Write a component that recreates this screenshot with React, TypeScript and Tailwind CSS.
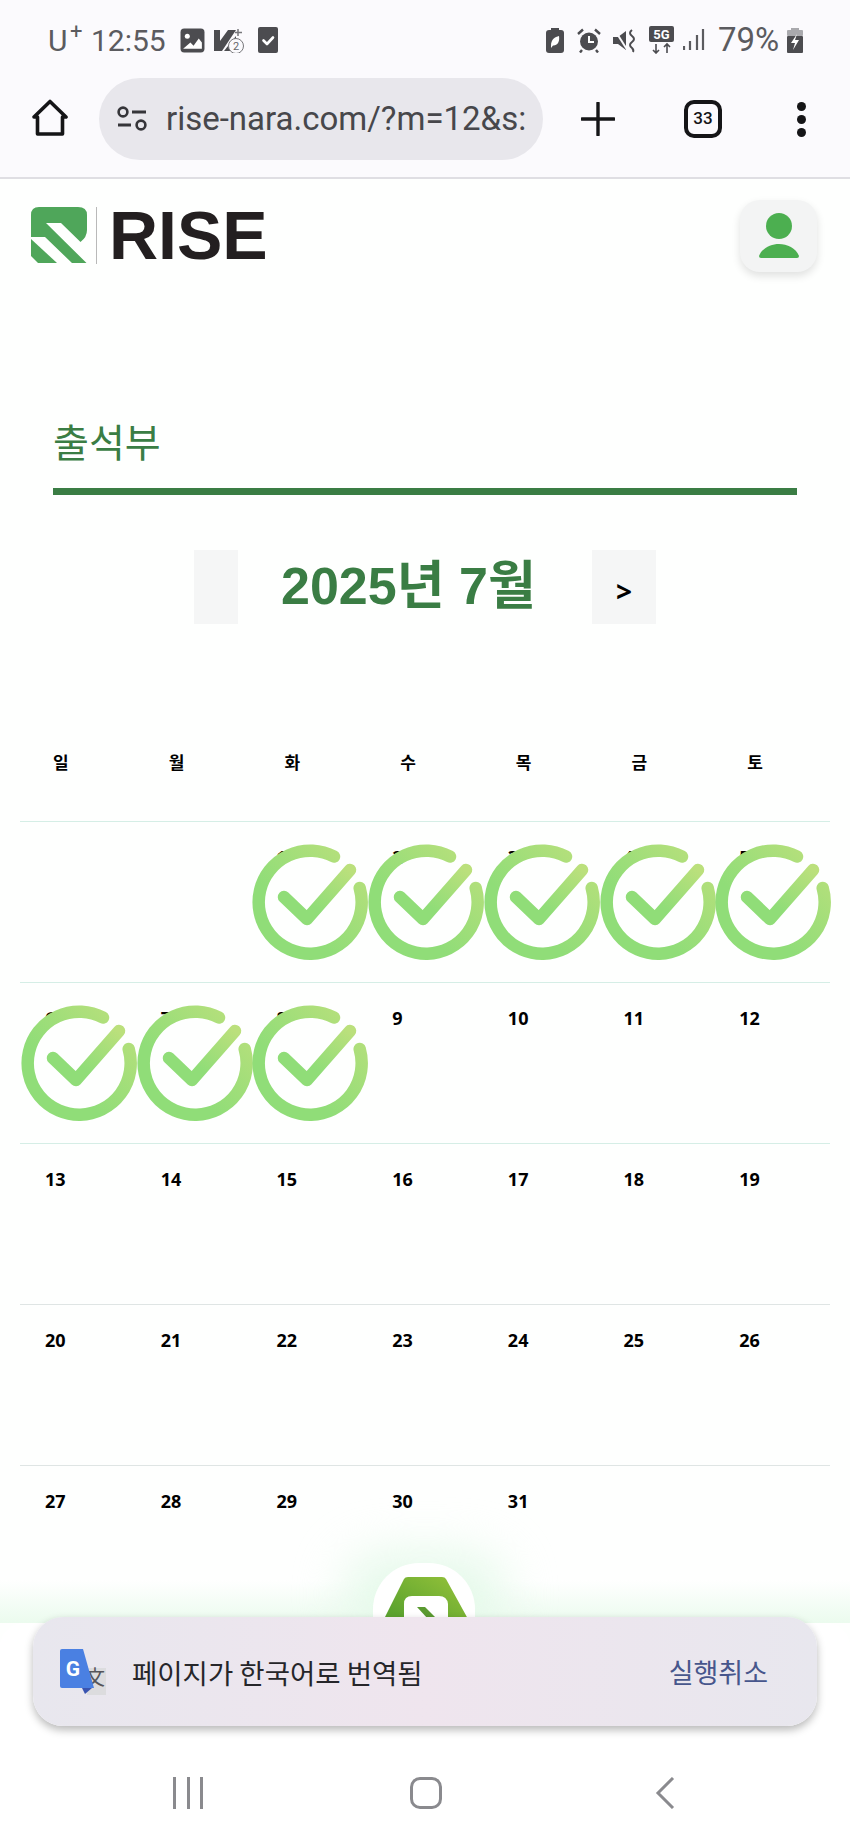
const WEEK_DAYS = ['일', '월', '화', '수', '목', '금', '토'];

const WEEKS: (number | null)[][] = [
  [null, null, 1, 2, 3, 4, 5],
  [6, 7, 8, 9, 10, 11, 12],
  [13, 14, 15, 16, 17, 18, 19],
  [20, 21, 22, 23, 24, 25, 26],
  [27, 28, 29, 30, 31, null, null],
];

const ATTENDED = [1, 2, 3, 4, 5, 6, 7, 8];

function CheckStamp({ day }: { day: number }) {
  const id = `stamp-${day}`;
  return (
    <svg viewBox="0 0 116 116" className="absolute left-px top-[22px] h-[116px] w-[116px]" aria-hidden="true">
      <defs>
        <linearGradient id={id} x1="0" y1="1" x2="1" y2="0">
          <stop offset="0.35" stopColor="#90dd78" />
          <stop offset="1" stopColor="#bbe07c" />
        </linearGradient>
      </defs>
      <g fill="none" stroke={`url(#${id})`} strokeWidth="12.5" strokeLinecap="round" strokeLinejoin="round">
        <path d="M82 12.5A51.5 51.5 0 1 0 107.7 44" />
        <path d="M32 53 L55 75 L98 26" />
      </g>
    </svg>
  );
}

function StatusBar() {
  return (
    <div className="flex h-[60px] items-center justify-between pl-[48px] pr-[47px] pt-[20px] font-['Roboto',sans-serif] text-[30px] text-[#5b5b5f]">
      <div className="flex items-center">
        <span className="relative w-[43px]">
          U<span className="absolute left-[22px] top-[-3px] text-[22px]">+</span>
        </span>
        <span className="w-[89px]">12:55</span>
        <svg viewBox="0 0 24 24" className="h-[25px] w-[25px]" aria-hidden="true">
          <rect x="0.5" y="0.5" width="23" height="23" rx="3.5" fill="#4c4c50" />
          <circle cx="7" cy="8" r="2.4" fill="#fff" />
          <path d="M3 20 L10 14 L13 17 L18 10 L21 14 V20 Z" fill="#fff" />
        </svg>
        <svg viewBox="0 0 34 26" className="ml-[9px] h-[26px] w-[34px]" aria-hidden="true">
          <path d="M0 3 H6 V14 L14 3 H22 L8 24 H0 Z" fill="#4c4c50" />
          <path d="M10 24 L22 9 V24 Z" fill="#4c4c50" />
          <circle cx="22" cy="19" r="7.5" fill="#fbfafd" stroke="#77777b" strokeWidth="1" />
          <text x="22" y="23" textAnchor="middle" fontSize="11" fill="#66666a" fontFamily="Roboto, sans-serif">2</text>
          <path d="M24 2 V9 M21 5.5 H28" stroke="#77777b" strokeWidth="1.5" />
        </svg>
        <svg viewBox="0 0 20 26" className="ml-[10px] h-[26px] w-[20px]" aria-hidden="true">
          <rect width="20" height="26" rx="2" fill="#4c4c50" />
          <path d="M5.5 13.5 L9 17 L15 10.5" fill="none" stroke="#fff" strokeWidth="2.6" strokeLinecap="round" strokeLinejoin="round" />
        </svg>
      </div>
      <div className="flex items-center">
        <svg viewBox="0 0 18 25" className="h-[25px] w-[18px]" aria-hidden="true">
          <rect x="5" width="8" height="3" fill="#4c4c50" />
          <rect y="2" width="18" height="23" rx="3" fill="#4c4c50" />
          <path d="M5 18 C5 11 9 9 13 8 C14 14 11 18 7 17.5 L5 20 Z" fill="#fff" />
        </svg>
        <svg viewBox="0 0 24 25" className="ml-[13px] h-[25px] w-[24px]" aria-hidden="true">
          <circle cx="12" cy="13.5" r="9" fill="#4c4c50" />
          <path d="M12 8 V14 H17" fill="none" stroke="#fff" strokeWidth="2" />
          <path d="M1 6 L6 1.5 M23 6 L18 1.5 M5 22 L3 24.5 M19 22 L21 24.5" stroke="#4c4c50" strokeWidth="2.4" />
        </svg>
        <svg viewBox="0 0 24 25" className="ml-[12px] h-[25px] w-[24px]" aria-hidden="true">
          <path d="M0 9 H5 L13 3 V22 L5 16 H0 Z" fill="#4c4c50" />
          <path d="M1 1 L15 23" stroke="#fbfafd" strokeWidth="2" />
          <path d="M19 2 Q15 5 19 8 Q23 11 19 14 Q15 17 19 20 Q21 22 20 24" fill="none" stroke="#4c4c50" strokeWidth="2" />
        </svg>
        <svg viewBox="0 0 25 28" className="ml-[12px] h-[28px] w-[25px]" aria-hidden="true">
          <rect width="25" height="16" rx="2" fill="#4c4c50" />
          <text x="12.5" y="13" textAnchor="middle" fontSize="13" fontWeight="700" fill="#fff" fontFamily="Roboto, sans-serif">5G</text>
          <path d="M7 18 V27 M4 24 L7 27 L10 24 M18 27 V18 M15 21 L18 18 L21 21" fill="none" stroke="#4c4c50" strokeWidth="1.6" />
        </svg>
        <svg viewBox="0 0 22 22" className="ml-[9px] h-[22px] w-[22px]" aria-hidden="true">
          <path d="M1 17 V21 M7 12 V21 M14 6 V21 M20 0 V21" stroke="#5b5b5f" strokeWidth="2.2" />
        </svg>
        <span className="ml-[13px] w-[64px] text-[33px]">79%</span>
        <svg viewBox="0 0 16 25" className="ml-[5px] h-[25px] w-[16px]" aria-hidden="true">
          <rect x="4" width="8" height="3" fill="#a9a9ad" />
          <rect y="2" width="16" height="6" rx="1" fill="#a9a9ad" />
          <rect y="8" width="16" height="17" rx="1" fill="#4c4c50" />
          <path d="M10 6 L4 15 H8 L6 22 L12 12 H8 Z" fill="#fff" />
        </svg>
      </div>
    </div>
  );
}

function Toolbar() {
  return (
    <div className="flex h-[119px] items-start border-b-2 border-[#dfdee3] pt-[18px]">
      <svg viewBox="0 0 38 38" className="ml-[31px] mt-[21px] h-[38px] w-[38px]" aria-hidden="true">
        <path d="M19 2.5 L35 18 H31.5 V35 H6.5 V18 H3 Z" fill="none" stroke="#151517" strokeWidth="3.6" strokeLinejoin="round" />
      </svg>
      <div className="ml-[30px] flex h-[82px] w-[444px] items-center rounded-full bg-[#e8e7ec] pl-[17px]">
        <svg viewBox="0 0 32 26" className="h-[26px] w-[32px] shrink-0" aria-hidden="true">
          <circle cx="7" cy="6" r="4.4" fill="none" stroke="#353539" strokeWidth="2.6" />
          <path d="M16 6 H30 M2 19 H15" stroke="#353539" strokeWidth="2.8" />
          <circle cx="25" cy="19" r="4.4" fill="none" stroke="#353539" strokeWidth="2.6" />
        </svg>
        <span className="ml-[18px] whitespace-nowrap font-['Roboto',sans-serif] text-[33px] leading-[40px] text-[#47474b]">
          rise-nara.com/?m=12&amp;s:
        </span>
      </div>
      <svg viewBox="0 0 34 34" className="ml-[38px] mt-[24px] h-[34px] w-[34px]" aria-hidden="true">
        <path d="M17 1 V33 M1 17 H33" stroke="#151517" strokeWidth="3.4" strokeLinecap="round" />
      </svg>
      <div className="ml-[69px] mt-[22px] flex h-[38px] w-[38px] items-center justify-center rounded-[10px] border-[4px] border-[#151517] font-['Roboto',sans-serif] text-[17px] font-medium text-[#151517]">
        33
      </div>
      <div className="ml-[75px] mt-[24px] flex flex-col gap-[4px]">
        <span className="h-[9px] w-[9px] rounded-full bg-[#151517]" />
        <span className="h-[9px] w-[9px] rounded-full bg-[#151517]" />
        <span className="h-[9px] w-[9px] rounded-full bg-[#151517]" />
      </div>
    </div>
  );
}

function SiteHeader() {
  return (
    <div className="flex items-start justify-between pl-[31px] pr-[33px] pt-[21px]">
      <div className="mt-[7px] flex items-center">
        <svg viewBox="0 0 56 57" className="h-[57px] w-[56px]" aria-hidden="true">
          <path d="M8 0 H47 Q56 0 56 8 V23 Q56 30 49.5 35 L30 16 H15 L55.5 56 H41 L14 30 H0 V8 Q0 0 8 0 Z" fill="#4fa65a" />
          <path d="M0 32 L26 56 H7 L0 49 Z" fill="#4fa65a" />
        </svg>
        <span className="ml-[9px] h-[57px] w-px bg-[#b9b9b9]" />
        <span className="ml-[12px] font-['Liberation_Sans',sans-serif] text-[68px] font-bold leading-[57px] text-[#231f20]">
          RISE
        </span>
      </div>
      <div className="flex h-[72px] w-[77px] items-center justify-center rounded-[20px] bg-[#f3f4f4] shadow-[0_4px_8px_rgba(0,0,0,0.12)]">
        <svg viewBox="0 0 40 46" className="h-[46px] w-[40px]" aria-hidden="true">
          <circle cx="20" cy="13" r="13" fill="#4caf50" />
          <path d="M0 43 C3 35 12 31 20 31 C28 31 37 35 40 43 Q40 45 38 45 H2 Q0 45 0 43 Z" fill="#4caf50" />
        </svg>
      </div>
    </div>
  );
}

function Calendar() {
  return (
    <div className="mx-[20px] mt-[120px]">
      <div className="grid h-[77px] grid-cols-7">
        {WEEK_DAYS.map((d) => (
          <div key={d} className="pl-[33px] pt-[6px] text-[17px] font-bold leading-[26px] text-black">
            {d}
          </div>
        ))}
      </div>
      {WEEKS.map((week, i) => (
        <div
          key={i}
          className={`grid h-[161px] grid-cols-7 border-t ${i < 3 ? 'border-[#d5eee6]' : 'border-[#dfe5e4]'}`}
        >
          {week.map((day, j) => (
            <div key={j} className="relative pl-[25px] pt-[23px] text-[18px] font-bold leading-[24px] text-black">
              {day}
              {day !== null && ATTENDED.includes(day) && <CheckStamp day={day} />}
            </div>
          ))}
        </div>
      ))}
    </div>
  );
}

function TranslateBar() {
  return (
    <div className="absolute inset-x-0 top-[1540px] h-[302px]">
      <div className="absolute inset-x-0 top-[40px] h-[43px] bg-gradient-to-b from-[#ffffff] to-[#ebfbee]" />
      <div className="absolute left-[345px] top-[14px] h-[80px] w-[160px] rounded-full bg-[#e4f9e9] blur-xl" />
      <div className="absolute inset-x-0 top-[83px] bottom-0 rounded-t-[24px] bg-white" />
      <div className="absolute left-[373px] top-[23px] h-[60px] w-[102px] rounded-t-[46px] bg-white" />
      <svg viewBox="0 0 84 50" className="absolute left-[384px] top-[37px] h-[50px] w-[84px]" aria-hidden="true">
        <defs>
          <linearGradient id="hexFill" x1="0" y1="1" x2="1" y2="0">
            <stop offset="0.2" stopColor="#5ca32f" />
            <stop offset="1" stopColor="#97c33a" />
          </linearGradient>
        </defs>
        <path d="M20 2 Q21 0 24 0 H58 Q61 0 62 2 L84 42 V50 H0 V42 Z" fill="url(#hexFill)" />
        <path d="M28 19 H55 Q63 19 64 27 V50 H20 V27 Q20 19 28 19 Z" fill="#fff" />
        <path d="M33 30 H41 L53 42 H44 Z" fill="#5a9a30" />
      </svg>
      <div className="absolute left-[33px] top-[77px] flex h-[109px] w-[784px] items-center rounded-[30px] bg-gradient-to-r from-[#e8e7ee] via-[#efe5ee] to-[#e8e7ee] pl-[27px] pr-[49px] shadow-[0_4px_8px_rgba(0,0,0,0.28)]">
        <svg viewBox="0 0 46 46" className="h-[46px] w-[46px] shrink-0" aria-hidden="true">
          <path d="M27 19 H46 V46 H27 Z" fill="#dcdcde" />
          <text x="35" y="36" textAnchor="middle" fontSize="20" fill="#55555a" fontFamily="'Noto Sans CJK KR', sans-serif">文</text>
          <path d="M2 0 H23 L34 39 H2 Q0 39 0 37 V2 Q0 0 2 0 Z" fill="#4a80e2" />
          <path d="M22 39 H32 L25 45 Z" fill="#3a54b0" />
          <text x="13" y="27" textAnchor="middle" fontSize="21" fontWeight="700" fill="#fff" fontFamily="Roboto, sans-serif">G</text>
        </svg>
        <span className="ml-[26px] whitespace-nowrap font-['Noto_Sans_CJK_KR',sans-serif] text-[27.5px] leading-[36px] text-[#26262a]">
          페이지가 한국어로 번역됨
        </span>
        <span className="ml-auto whitespace-nowrap font-['Noto_Sans_CJK_KR',sans-serif] text-[27px] leading-[36px] text-[#47568c]">
          실행취소
        </span>
      </div>
      <div className="absolute inset-x-0 top-[237px] flex items-start">
        <div className="ml-[173px] flex h-[32px] w-[30px] justify-between">
          <span className="w-[3px] bg-[#8a8a8e]" />
          <span className="w-[3px] bg-[#8a8a8e]" />
          <span className="w-[3px] bg-[#8a8a8e]" />
        </div>
        <div className="ml-[207px] h-[32px] w-[32px] rounded-[10px] border-[3px] border-[#8a8a8e]" />
        <svg viewBox="0 0 20 32" className="ml-[213px] h-[32px] w-[20px]" aria-hidden="true">
          <path d="M18 1 L3 16 L18 31" fill="none" stroke="#8a8a8e" strokeWidth="3" />
        </svg>
      </div>
    </div>
  );
}

export default function App() {
  return (
    <div className="relative h-[1842px] w-[850px] overflow-hidden bg-[#fefffe] font-['Noto_Sans','Noto_Sans_CJK_KR',sans-serif]">
      <div className="bg-[#fbfafd]">
        <StatusBar />
        <Toolbar />
      </div>
      <SiteHeader />

      {/* Page title */}
      <div className="mx-[53px] mt-[140px] border-b-[7px] border-[#3a7d44] pb-[20px]">
        <h1 className="font-['Noto_Sans_CJK_KR',sans-serif] text-[39px] leading-[56px] text-[#3a7d44]">출석부</h1>
      </div>

      {/* Month switcher */}
      <div className="mt-[55px] flex items-center justify-center">
        <div className="h-[74px] w-[44px] bg-[#f5f6f6]" />
        <h2 className="mx-[43px] mb-[2px] w-[268px] whitespace-nowrap font-['Liberation_Sans','Noto_Sans_CJK_KR',sans-serif] text-[52px] font-bold leading-[64px] text-[#3a7d44]">
          2025년 7월
        </h2>
        <div className="flex h-[74px] w-[64px] items-center justify-center bg-[#f5f6f6] pt-[8px] text-[28px] font-bold text-black">
          &gt;
        </div>
      </div>

      <Calendar />
      <TranslateBar />
    </div>
  );
}
